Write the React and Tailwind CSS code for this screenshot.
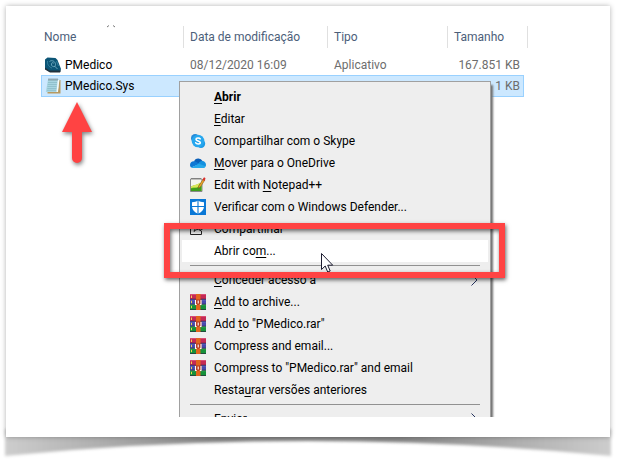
import React from 'react';

const files = [
  { name: 'PMedico', date: '08/12/2020 16:09', type: 'Aplicativo', size: '167.851 KB', icon: 'app' },
  { name: 'PMedico.Sys', date: '', type: '', size: '1 KB', icon: 'note', selected: true },
];

// [before, access key, after]
const menuItems = [
  { label: ['', 'A', 'brir'], bold: true },
  { label: ['', 'E', 'ditar'] },
  { label: ['Compartilhar com o Skype', '', ''], icon: 'skype' },
  { label: ['', 'M', 'over para o OneDrive'], icon: 'onedrive' },
  { label: ['Edit with ', 'N', 'otepad++'], icon: 'notepad' },
  { label: ['Verificar com o Windows Defender...', '', ''], icon: 'defender' },
  { label: ['Compartilhar', '', ''], icon: 'share' },
  { label: ['Abrir co', 'm', '...'], active: true },
  { separator: true },
  { label: ['', 'C', 'onceder acesso a'], submenu: true },
  { label: ['', 'A', 'dd to archive...'], icon: 'rar' },
  { label: ['Add ', 't', 'o "PMedico.rar"'], icon: 'rar' },
  { label: ['Compress and email...', '', ''], icon: 'rar' },
  { label: ['Compress to "PMedico.rar" and email', '', ''], icon: 'rar' },
  { label: ['Resta', 'u', 'rar versões anteriores'] },
  { separator: true },
  { label: ['Enviar', '', ''], submenu: true },
];

const AppIcon = () => (
  <svg className="size-4 shrink-0" viewBox="0 0 16 16" fill="none">
    <path d="M0 2.500 2.500.5 10.500 1l2 2L16 12l-1 3H5l-5-3z" fill="#0c5576" />
    <path d="M0 10.500 4.500 13.500H16L15 15.500H5L0 12.500z" fill="#20303c" />
    <path d="M4.500 4.500c2.500-2 6 0 6 3s-3.500 2.500-4 .5 1-3 2.300-1.800M9.500 9l3 3" stroke="#8cc4d6" strokeWidth=".7" />
    <path d="M2.500 4c-.5 3.500 1.500 6 4.500 7M11.500 4l2 5" stroke="#4b9ab5" strokeWidth=".6" />
  </svg>
);

const NoteIcon = () => (
  <svg className="size-4 shrink-0" viewBox="0 0 16 16">
    <path d="M13 2h2.500v13.500H2.500V14H12z" fill="#b79a62" />
    <path d="M3 1.500h11.500L12.800 14H.8z" fill="#a9d6e2" />
    <path d="M12.800 2h1.500L13 14h-1.500z" fill="#f6fbfb" />
    <path d="M3 4.500h9M2.800 6.500h9M2.500 8.500h9M2.300 10.500h9M2 12.300h9" stroke="#86b8c4" strokeWidth=".7" />
    <path d="M4 .5v2M6 .5v2M8 .5v2M10 .5v2M12 .5v2" stroke="#57656a" strokeWidth=".9" />
  </svg>
);

const SkypeIcon = () => (
  <svg className="size-4" viewBox="0 0 16 16">
    <circle cx="5.200" cy="5.200" r="4.200" fill="#2489d8" />
    <circle cx="11" cy="10.800" r="4.200" fill="#1d9be6" />
    <circle cx="8" cy="8" r="6.300" fill="#27a7ee" />
    <path d="M10.200 5.900C9.500 4.600 6 4.500 6 6.300c0 2 4.300 1.200 4.300 3.300 0 1.900-3.900 1.900-4.600.2" fill="none" stroke="#fff" strokeWidth="1.600" strokeLinecap="round" />
  </svg>
);

const OneDriveIcon = () => (
  <svg className="size-4" viewBox="0 0 16 16">
    <path d="M4 6.500A4.600 4.600 0 0 1 12.500 6L9 10z" fill="#0a5fb8" />
    <path d="M4 6.200C1.800 6 0 7.800 0 9.900 0 11 .6 12 1.300 12.600L9.500 9 6.500 6.900A4.500 4.500 0 0 0 4 6.200z" fill="#0f78d4" />
    <path d="M12.500 6a3.500 3.500 0 0 0-3 .9L7 10l7 2.500 1.700-1.300C16.700 8.700 15 6.100 12.500 6z" fill="#1490df" />
    <path d="m9 8.800 6.600 2.400c-.5 1.200-1.200 1.900-2.600 1.900H4c-1.200 0-2-.1-2.800-.7z" fill="#27a8ea" />
  </svg>
);

const NotepadIcon = () => (
  <svg className="size-4" viewBox="0 0 16 16">
    <path d="M.5 2h11.500v12.500H.5z" fill="#f4f4ee" stroke="#8a8a8a" />
    <path d="M1 14V9.500c3-1.500 6-1.500 10.500-4V14z" fill="#78c51c" />
    <path d="M1 14v-2.500c4-1 7-.5 10.500-2.500v5z" fill="#3f9e1c" />
    <path d="M1 9.500c3-2 6-1.500 9-4L8 10c-2 1-4 0-7 1z" fill="#dce65a" />
    <path d="M1.500 1.500h10" stroke="#444" strokeWidth="1.200" strokeDasharray="1 1" />
    <path d="m8.200 11.500.5-2.500 4.500-7 1.700 1-4.500 7z" fill="#eda428" stroke="#70501a" strokeWidth=".5" />
    <path d="m12.500 2.800 1-1.800c.7-1 2.300 0 1.900 1L14.400 4z" fill="#d9302c" />
  </svg>
);

const DefenderIcon = () => (
  <svg className="size-4" viewBox="0 0 16 16">
    <path d="M0 0h16v16H0z" fill="#0a78d6" />
    <path d="M8 1.500c1.500 1 3.500 1.600 6 1.700v4.300c0 3.300-2.500 5.700-6 7.300-3.500-1.600-6-4-6-7.300V3.200c2.500-.1 4.500-.7 6-1.700z" fill="#fff" />
    <path d="M8 1v14M1.500 7.500h13" stroke="#0a78d6" strokeWidth="1.100" />
  </svg>
);

const ShareIcon = () => (
  <svg className="size-4" viewBox="0 0 16 16" fill="none" stroke="#222">
    <path d="M4 4.500H.5v9h11V10M4 10.500c.5-3 3-4.500 6-4.500V3.500l3.500 3.500L10 10V8c-2.500 0-4.500.8-6 2.500z" />
  </svg>
);

const RarIcon = () => (
  <svg className="size-4" viewBox="0 0 16 16">
    <path d="M0 0h16v5H0z" fill="#c52a55" />
    <path d="M0 5h16v5.500H0z" fill="#4749ad" />
    <path d="M0 10.500h16V16H0z" fill="#16913a" />
    <path d="M0 .5h16" stroke="#e8668a" strokeWidth=".6" />
    <path d="M0 5.900h16" stroke="#8587d8" strokeWidth=".6" />
    <path d="M0 10.900h16" stroke="#4dbd68" strokeWidth=".6" />
    <path d="M0 5.200h16M0 10.200h16M0 15.600h16" stroke="#2b2340" strokeWidth=".7" />
    <path d="M1.500 1.500V4M1.500 6.800v2.400M1.500 11.800v2.400" stroke="#f2d34e" />
    <path d="M6 0h4.500v16H6z" fill="#e2661d" />
    <path d="M5 5.500h6.500v5.200H5z" fill="#b8391c" />
    <path d="M5.500 6v4.500h1.200M11 6v4.500H9.800M8.200 6.500v3" fill="none" stroke="#fff" strokeWidth="1.100" />
  </svg>
);

const icons = {
  app: AppIcon,
  note: NoteIcon,
  skype: SkypeIcon,
  onedrive: OneDriveIcon,
  notepad: NotepadIcon,
  defender: DefenderIcon,
  share: ShareIcon,
  rar: RarIcon,
};

const MenuItem = ({ item }) => {
  const Icon = icons[item.icon];
  const [before, accessKey, after] = item.label;

  return (
    <button
      type="button"
      role="menuitem"
      className={`flex h-[22px] w-full shrink-0 items-center gap-2 pl-2 pr-2.5 text-left whitespace-nowrap ${item.active ? 'bg-white' : ''} ${item.bold ? 'font-bold' : ''}`}
    >
      <span className="size-4 shrink-0">{Icon && <Icon />}</span>
      <span className="grow">
        {before}
        <span className="underline underline-offset-2">{accessKey}</span>
        {after}
      </span>
      {item.submenu && (
        <svg className="h-3 w-[7px]" viewBox="0 0 7 12" fill="none" stroke="#26335f">
          <path d="m.5.5 5.500 5.500-5.500 5.500" />
        </svg>
      )}
    </button>
  );
};

const ContextMenu = () => (
  <div className="h-[336px] overflow-hidden pr-2">
    <div
      role="menu"
      className="flex flex-col border border-[#a0a0a0] bg-[#eeeeee] px-0.5 py-1 text-black shadow-[2px_4px_2px_#707070]"
    >
      {menuItems.map((item, index) =>
        item.separator ? (
          <div key={index} role="separator" className="mx-2 my-[3px] h-px shrink-0 bg-[#919191]" />
        ) : (
          <MenuItem key={index} item={item} />
        )
      )}
    </div>
  </div>
);

const FileTable = () => (
  <table className="w-full table-fixed border-separate border-spacing-0 text-left">
    <colgroup>
      <col className="w-[143px]" />
      <col className="w-[144px]" />
      <col className="w-[120px]" />
      <col className="w-[76px]" />
      <col className="w-1" />
    </colgroup>
    <thead className="text-[#4c607a]">
      <tr className="h-[22px]">
        <th className="relative border-r border-[#e0e0e0] py-0 pl-[3px] font-normal">
          Nome
          <svg className="absolute -top-0.5 left-16 h-[5px] w-3" viewBox="0 0 12 5" fill="none" stroke="#777">
            <path d="m2 3 2-1.500M8 1.500 10 3" />
          </svg>
        </th>
        <th className="border-r border-[#e0e0e0] py-0 pl-1.5 font-normal">Data de modificação</th>
        <th className="border-r border-[#e0e0e0] py-0 pl-1.5 font-normal">Tipo</th>
        <th colSpan={2} className="border-r border-[#e0e0e0] py-0 pl-1.5 font-normal">Tamanho</th>
      </tr>
    </thead>
    <tbody className="text-[#6d6d6d]">
      {files.map((file) => {
        const Icon = icons[file.icon];
        const cell = file.selected ? 'border-y border-[#99d1ff] bg-[#cce8ff] h-[22px] py-0' : 'h-[27px] pt-1.5 pb-0';
        return (
          <tr key={file.name} aria-selected={!!file.selected}>
            <td className={`${cell} text-black ${file.selected ? 'border-l pl-[3px]' : 'pl-1'}`}>
              <span className="flex items-center gap-1">
                <Icon />
                {file.name}
              </span>
            </td>
            <td className={`${cell} pl-1.5`}>{file.date}</td>
            <td className={`${cell} pl-1.5`}>{file.type}</td>
            <td className={`${cell} text-right ${file.selected ? 'border-r pr-[3px]' : 'pr-1'}`}>{file.size}</td>
            <td className="p-0" />
          </tr>
        );
      })}
    </tbody>
  </table>
);

const ArrowUp = () => (
  <svg className="h-[68px] w-9 drop-shadow-[1px_2px_2px_rgba(0,0,0,0.5)]" viewBox="0 0 36 68">
    <path d="M18 1 33 31H23v26a5 5 0 0 1-10 0V31H3z" fill="#ff4343" />
  </svg>
);

const Cursor = () => (
  <svg className="absolute top-[172px] left-[142px] h-5 w-3.5" viewBox="0 0 14 20">
    <path d="M.5.500v16l3.700-3.500 2.500 6 2.500-1-2.500-5.800h5z" fill="#fff" stroke="#1c1c30" />
  </svg>
);

// Lifted-paper shadow below the card
const CurvedShadow = () => (
  <svg className="block h-7 w-full overflow-visible" viewBox="0 0 604 28" preserveAspectRatio="none">
    <defs>
      <linearGradient id="paper" x1="0" x2="1" y1="0" y2="0">
        <stop offset="0" stopColor="#cdcdcd" />
        <stop offset=".15" stopColor="#b0b0b0" />
        <stop offset=".35" stopColor="#858585" />
        <stop offset=".65" stopColor="#858585" />
        <stop offset=".85" stopColor="#b0b0b0" />
        <stop offset="1" stopColor="#cdcdcd" />
      </linearGradient>
      <filter id="soft" x="-5%" y="-50%" width="110%" height="200%">
        <feGaussianBlur stdDeviation="1.500" />
      </filter>
    </defs>
    <path d="M-1-8H605V19Q454 4 302 4T-1 19z" fill="url(#paper)" filter="url(#soft)" />
  </svg>
);

export default function App() {
  return (
    <main className="bg-white pt-1.5 pr-3.5 pl-1.5 font-[Roboto,'Open_Sans',sans-serif] text-[12px] leading-4">
      <section className="relative z-10 bg-white pt-5 pr-[82px] pb-5 pl-[35px] shadow-[0_0_5px_rgba(0,0,0,0.3)]">
        <FileTable />
        <div className="-mt-4 flex">
          <div className="w-[138px] shrink-0 pt-5 pl-[18px]">
            <ArrowUp />
          </div>
          <div className="relative w-80">
            <ContextMenu />
            <Cursor />
            <div className="pointer-events-none absolute top-[142px] -left-[15px] h-[55px] w-[341px] border-6 border-[#ff4343] shadow-[1px_2px_4px_rgba(0,0,0,0.6),inset_1px_2px_4px_rgba(0,0,0,0.6)]" />
          </div>
        </div>
      </section>
      <CurvedShadow />
    </main>
  );
}
